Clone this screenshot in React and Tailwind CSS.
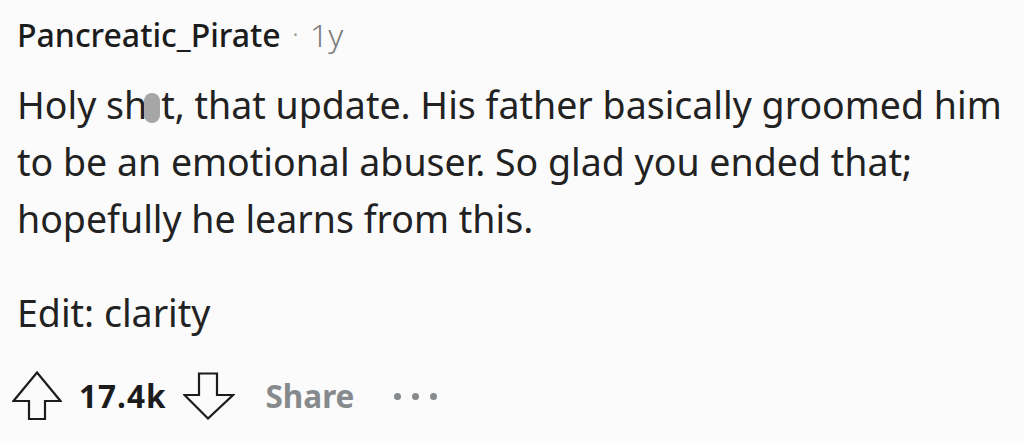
export default function App() {
  const body = { fontFamily: '"Noto Sans", "Open Sans", sans-serif' };
  return (
    <div className="w-[1024px] h-[443px] bg-[#fbfbfb] overflow-hidden text-[#222222]" style={body}>
      <div className="pl-[17px] pt-[15px]">
        <div className="flex items-center h-[40px] text-[32px] leading-[40px]">
          <span className="font-medium text-[#1c1c1c]">Pancreatic_Pirate</span>
          <span className="text-[#a0a0a0] ml-[12px] mr-[12px] text-[20px]">·</span>
          <span className="text-[#7c7c7c] font-light">1y</span>
        </div>
        <div className="mt-[21px] text-[37.5px] leading-[57px] pr-[10px]">
          <p>
            Holy sh
            <span className="inline-block w-[16px] h-[30px] bg-[#a6a6a6] rounded-[8px] align-[-4px] -ml-[3px] mr-[1px] blur-[0.5px]"></span>
            t, that update. His father basically groomed him to be an emotional abuser. So glad you ended that; hopefully he learns from this.
          </p>
          <p className="mt-[37px]">Edit: clarity</p>
        </div>
        <div className="mt-[30px] flex items-center h-[50px]">
          <svg width="50" height="50" viewBox="0 0 50 50" className="-ml-[5px]">
            <path d="M25 1.5 L48.5 30 L33 30 L33 48 L17 48 L17 30 L1.5 30 Z" fill="none" stroke="#1c1c1c" strokeWidth="2.2" strokeLinejoin="miter" />
          </svg>
          <span className="ml-[17px] text-[31.5px] font-bold tracking-[1px] text-[#1c1c1c]">17.4k</span>
          <svg width="52" height="48" viewBox="0 0 52 48" className="ml-[17px]">
            <path d="M16 1.5 L34 1.5 L34 23 L50 23 L25 46.5 L1.5 23 L16 23 Z" fill="none" stroke="#1c1c1c" strokeWidth="2.2" />
          </svg>
          <span className="ml-[30px] text-[31.5px] font-bold text-[#878a8c]">Share</span>
          <span className="ml-[40px] flex gap-[11px] items-center">
            <span className="w-[7px] h-[7px] rounded-full bg-[#878a8c]"></span>
            <span className="w-[7px] h-[7px] rounded-full bg-[#878a8c]"></span>
            <span className="w-[7px] h-[7px] rounded-full bg-[#878a8c]"></span>
          </span>
        </div>
      </div>
    </div>
  );
}
